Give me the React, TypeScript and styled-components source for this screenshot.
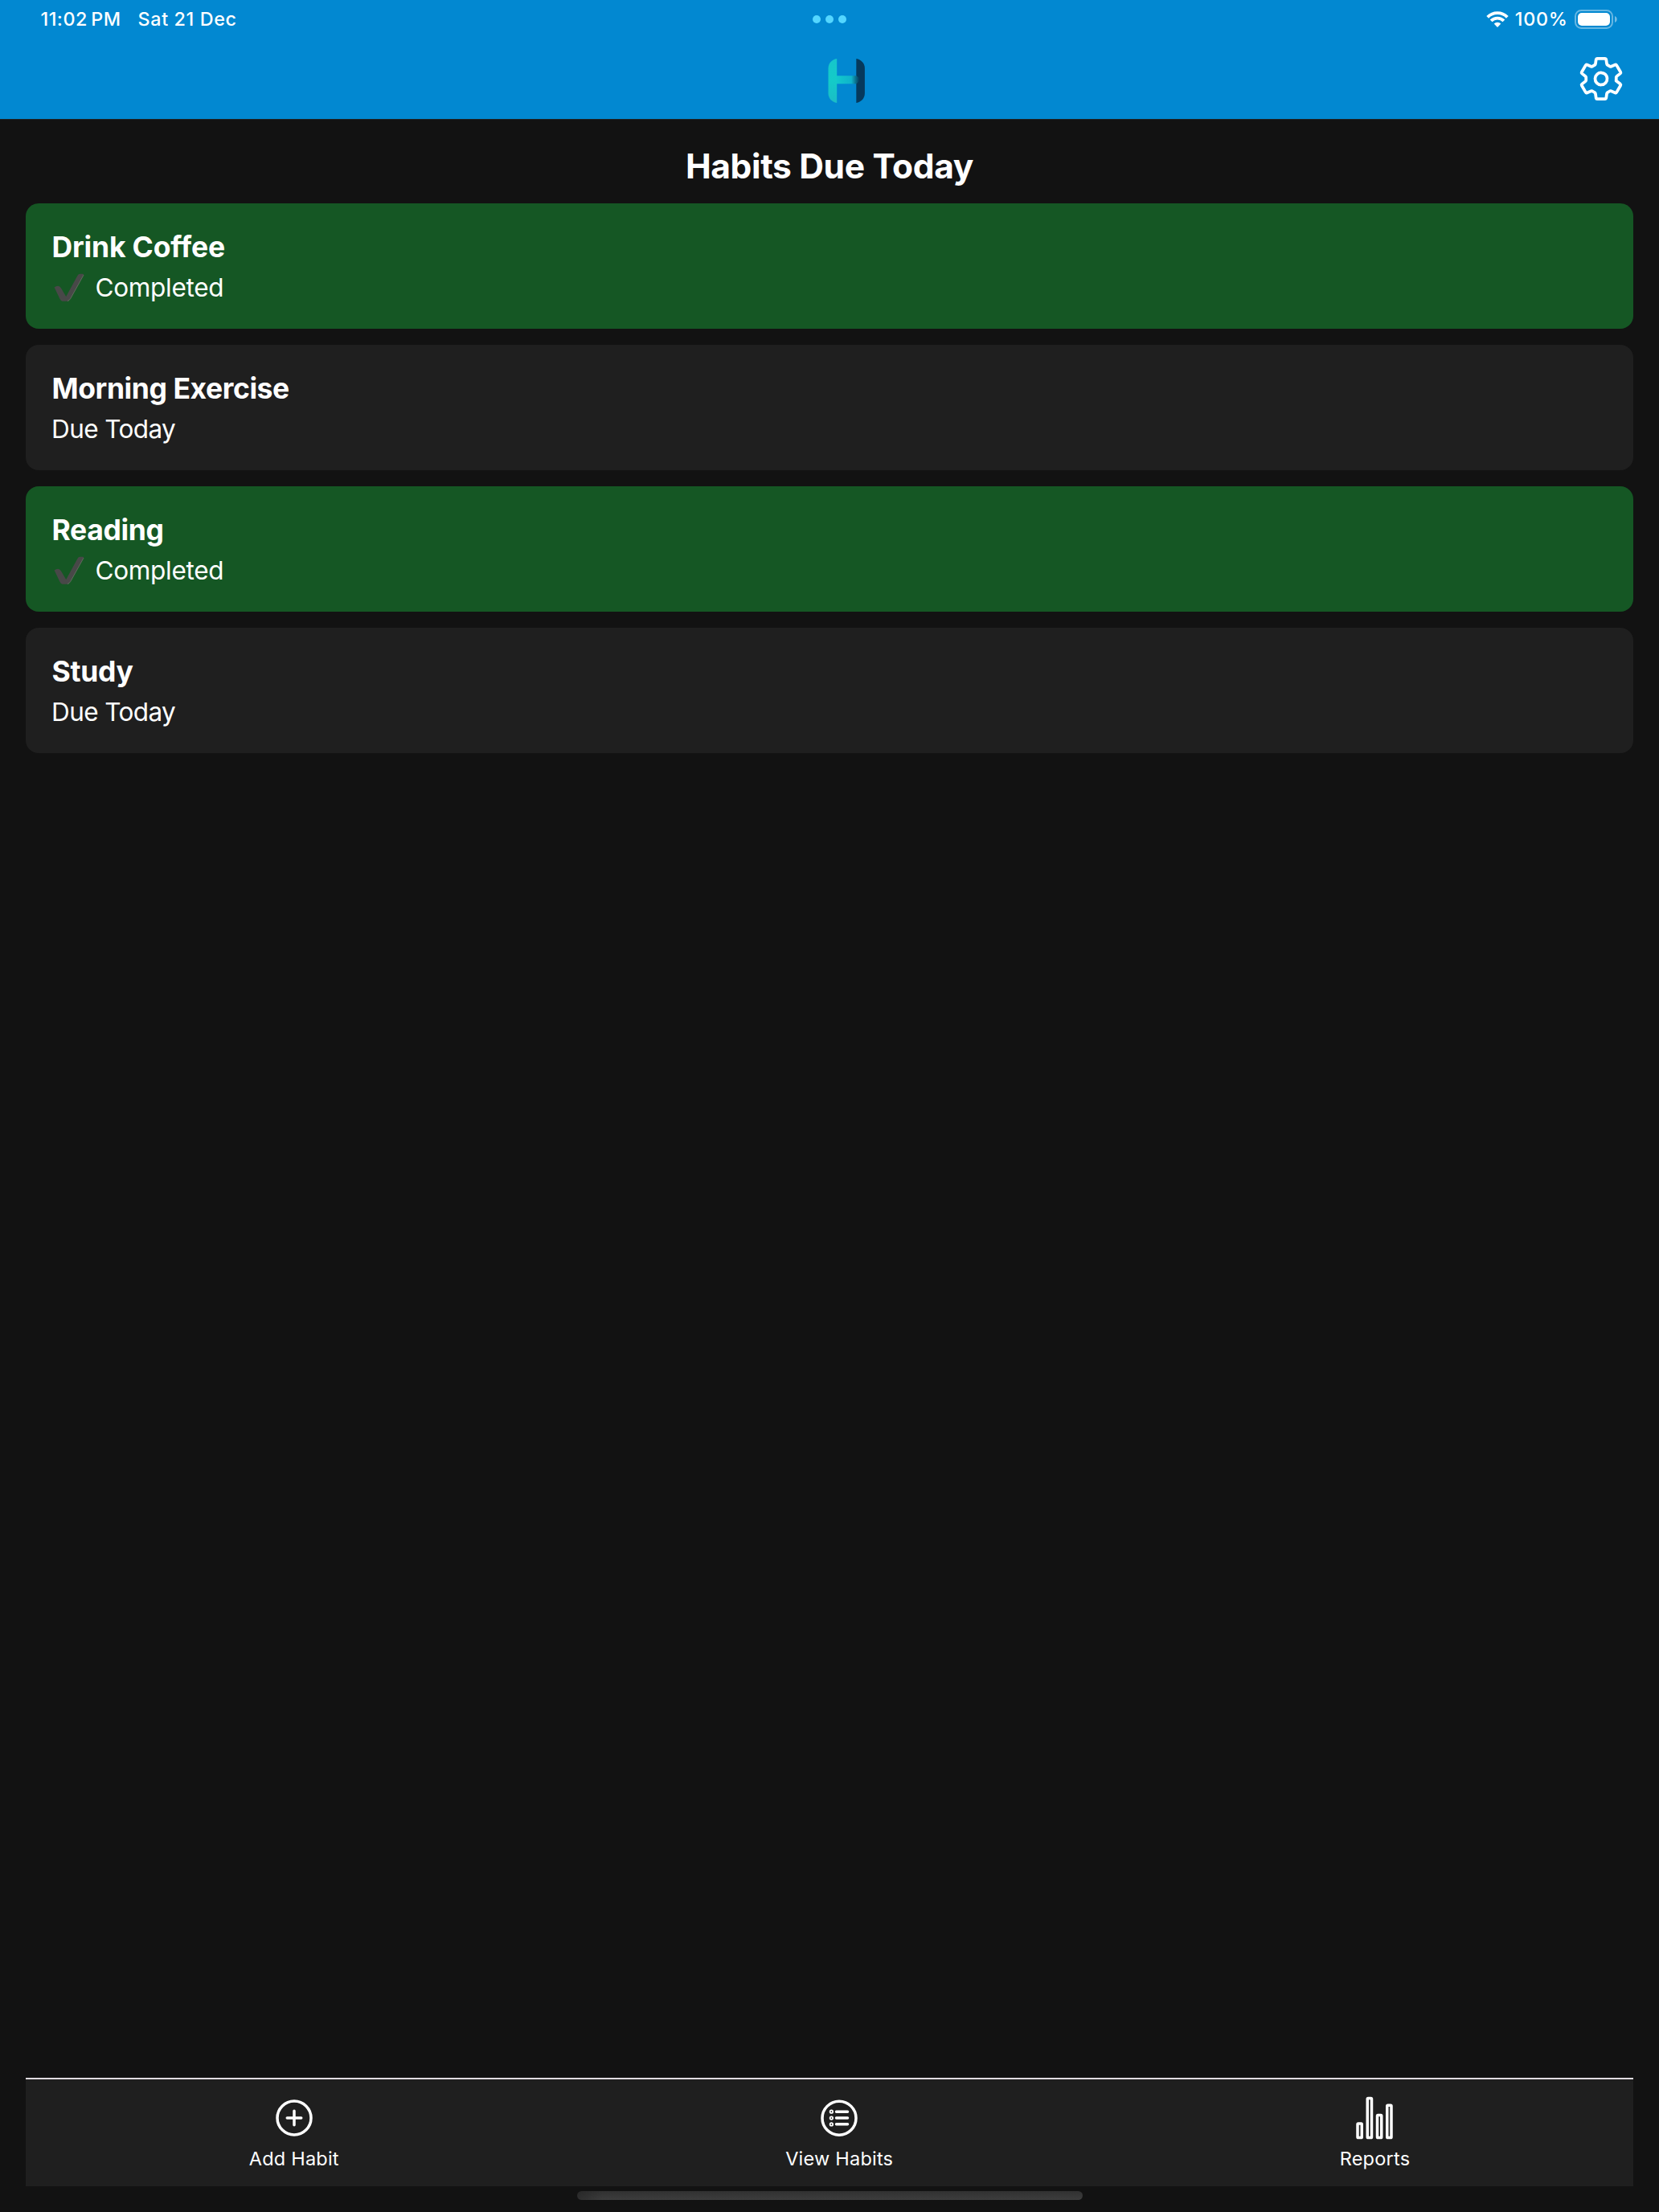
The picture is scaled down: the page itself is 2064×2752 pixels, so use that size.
import React from "react";
import styled, { createGlobalStyle } from "styled-components";
import {
  IoAddCircleOutline,
  IoListCircleOutline,
  IoSettingsOutline,
  IoStatsChartOutline,
} from "react-icons/io5";

const GlobalStyle = createGlobalStyle`
  *, *::before, *::after { box-sizing: border-box; }
  body {
    margin: 0;
    background: #121212;
    color: #fff;
    font-family: Inter, "Liberation Sans", sans-serif;
    font-feature-settings: "calt" 0;
  }
  svg { display: block; flex: none; }
`;

const Screen = styled.div`
  display: flex;
  flex-direction: column;
  width: 100%;
  height: 100vh;
  min-height: 2752px;
  overflow: hidden;
`;

const Header = styled.header`
  height: 149px;
  background: #0288d1;
  border-bottom: 1px solid #1f2123;
`;

const StatusBar = styled.div`
  display: grid;
  grid-template-columns: 1fr auto 1fr;
  align-items: center;
  height: 48px;
  padding: 0 51px 0 50.5px;
  font-size: 23.3px;
  font-weight: 500;
  line-height: 28px;
`;

const StatusGroup = styled.div<{ $end?: boolean }>`
  display: flex;
  align-items: center;
  justify-content: ${(p) => (p.$end ? "flex-end" : "flex-start")};
`;

const StatusText = styled.span<{ $spacing: number; $before?: number; $after?: number }>`
  margin: 0 ${(p) => p.$after ?? 0}px 0 ${(p) => p.$before ?? 0}px;
  letter-spacing: ${(p) => p.$spacing}px;
  white-space: nowrap;
`;

const Dots = styled.div`
  display: flex;
  gap: 6px;
`;

const Dot = styled.i`
  width: 10px;
  height: 10px;
  border-radius: 50%;
  background: #54d6ff;
`;

const NavBar = styled.div`
  display: grid;
  grid-template-columns: 1fr auto 1fr;
  align-items: center;
  height: 100px;
  padding: 0 42px 0 84px;
`;

const SettingsButton = styled.button`
  grid-column: 3;
  justify-self: end;
  padding: 0;
  border: 0;
  background: none;
  color: #fff;
`;

const LogoSlot = styled.div`
  grid-column: 2;
  padding-top: 5px;
`;

const Main = styled.main`
  flex: 1;
  padding: 32px 32px 0;
`;

const Title = styled.h1`
  margin: 0 0 20px;
  font-size: 42.5px;
  line-height: 52px;
  font-weight: 700;
  letter-spacing: -0.35px;
  text-align: center;
`;

const HabitList = styled.div`
  display: flex;
  flex-direction: column;
  gap: 20px;
`;

const HabitCard = styled.article<{ $done: boolean }>`
  height: 156px;
  padding: 33px 32px;
  border-radius: 16px;
  background: ${(p) => (p.$done ? "#155724" : "#1f1f1f")};
`;

const HabitName = styled.h2<{ $spacing: number }>`
  margin: 0 0 8px 0.6px;
  font-size: 35.5px;
  line-height: 44px;
  font-weight: 700;
  letter-spacing: ${(p) => p.$spacing}px;
`;

const HabitStatus = styled.div<{ $done: boolean }>`
  display: flex;
  align-items: center;
  font-size: 31.5px;
  line-height: 40px;
  font-weight: 370;
  letter-spacing: ${(p) => (p.$done ? -0.3 : -0.6)}px;
`;

const TabBar = styled.nav`
  display: flex;
  justify-content: space-around;
  height: 135px;
  margin: 0 32px;
  padding: 20px 0;
  border-top: 2px solid #e0dce0;
  background: #1f1f1f;
`;

const Tab = styled.div`
  display: flex;
  flex-direction: column;
  align-items: center;
  gap: 8px;
  font-size: 23.5px;
  line-height: 29px;
  font-weight: 380;
  letter-spacing: 0.22px;
`;

const HomeArea = styled.footer`
  display: flex;
  justify-content: center;
  height: 32px;
  padding-top: 6px;
`;

const HomeIndicator = styled.div`
  width: 629px;
  height: 11px;
  border-radius: 6px;
  background: linear-gradient(90deg, rgba(31, 31, 31, 0.5), rgba(31, 31, 31, 0) 32px),
    linear-gradient(#313131, #3d3d3d);
`;

const Logo = () => (
  <svg width="46" height="55" viewBox="0 0 46 55">
    <defs>
      <linearGradient id="logoBar" x1="11" x2="39" y1="0" y2="0" gradientUnits="userSpaceOnUse">
        <stop offset="0" stopColor="#12c8cc" />
        <stop offset="0.65" stopColor="#0fb3cb" />
        <stop offset="1" stopColor="#063a5c" />
      </linearGradient>
      <linearGradient id="logoLeft" x1="0" x2="0" y1="0" y2="1">
        <stop offset="0" stopColor="#16c5cb" />
        <stop offset="0.5" stopColor="#14cbc8" />
        <stop offset="1" stopColor="#1bbcc6" />
      </linearGradient>
    </defs>
    <path d="M11.2 0V55C4.6 54 .5 49 .5 43V12C.5 6 4.6 1 11.2 0Z" fill="url(#logoLeft)" />
    <path d="M35.300 0V55C41.6 54 45.900 49 45.900 43V12C45.900 6 41.6 1 35.300 0Z" fill="#06395c" />
    <path d="M11 21.300H35.500L39 24V28L35.500 31.300H11Z" fill="url(#logoBar)" />
  </svg>
);

const Wifi = () => (
  <svg width="28" height="20" viewBox="0 0 28 20">
    <g fill="none" stroke="#fff" strokeWidth="3.9">
      <path d="M1.700 7.300a17.300 17.300 0 0 1 24.600 0" />
      <path d="M6.100 11.900a11.200 11.200 0 0 1 15.800 0" />
    </g>
    <path d="M14 20l-4.300-4.400a6.100 6.100 0 0 1 8.600 0Z" fill="#fff" />
  </svg>
);

const Battery = () => (
  <svg width="54" height="24" viewBox="0 0 54 24">
    <rect x="1" y="1" width="46" height="22" rx="7.2" fill="none" stroke="#fff" strokeOpacity="0.4" strokeWidth="2" />
    <rect x="4" y="4" width="40" height="16" rx="5" fill="#fff" />
    <path d="M50 8c3.600 1.200 3.600 6.800 0 8Z" fill="#fff" fillOpacity="0.45" />
  </svg>
);

const Check = () => (
  <svg width="54.500" height="36" viewBox="0 0 54.500 36">
    <path
      d="M3.600 17.400Q5.600 15.800 8.200 15.800Q10.400 15.800 12 18.600L18.200 29L32.400 3Q33.600 .8 35.600 .8H39.200Q40.500 .8 40 2.400L23.800 31.600Q22 34.800 20 34.800H13.600Q12 34.800 10.400 31.800Z"
      fill="#484848"
    />
    <path d="M20 34.600Q22 34 23.800 31.400L40 2.200" fill="none" stroke="#75816f" strokeWidth="0.6" />
  </svg>
);

const habits = [
  { name: "Drink Coffee", done: true, spacing: -0.18 },
  { name: "Morning Exercise", done: false, spacing: -0.42 },
  { name: "Reading", done: true, spacing: -0.38 },
  { name: "Study", done: false, spacing: -0.3 },
];

const tabs = [
  { label: "Add Habit", Icon: IoAddCircleOutline },
  { label: "View Habits", Icon: IoListCircleOutline },
  { label: "Reports", Icon: IoStatsChartOutline },
];

export default function App() {
  return (
    <Screen>
      <GlobalStyle />
      <Header>
        <StatusBar>
          <StatusGroup>
            <StatusText $spacing={0.5} $after={21}>11:02{"\u2009"}PM</StatusText>
            <StatusText $spacing={0.65}>Sat 21 Dec</StatusText>
          </StatusGroup>
          <Dots>
            <Dot />
            <Dot />
            <Dot />
          </Dots>
          <StatusGroup $end>
            <Wifi />
            <StatusText $spacing={0.7} $before={8} $after={8.5}>100%</StatusText>
            <Battery />
          </StatusGroup>
        </StatusBar>
        <NavBar>
          <LogoSlot>
            <Logo />
          </LogoSlot>
          <SettingsButton aria-label="Settings">
            <IoSettingsOutline size={60} />
          </SettingsButton>
        </NavBar>
      </Header>
      <Main>
        <Title>Habits Due Today</Title>
        <HabitList>
          {habits.map(({ name, done, spacing }) => (
            <HabitCard key={name} $done={done}>
              <HabitName $spacing={spacing}>{name}</HabitName>
              <HabitStatus $done={done}>
                {done && <Check />}
                {done ? "Completed" : "Due Today"}
              </HabitStatus>
            </HabitCard>
          ))}
        </HabitList>
      </Main>
      <TabBar>
        {tabs.map(({ label, Icon }) => (
          <Tab key={label}>
            <Icon size={56} />
            {label}
          </Tab>
        ))}
      </TabBar>
      <HomeArea>
        <HomeIndicator />
      </HomeArea>
    </Screen>
  );
}
